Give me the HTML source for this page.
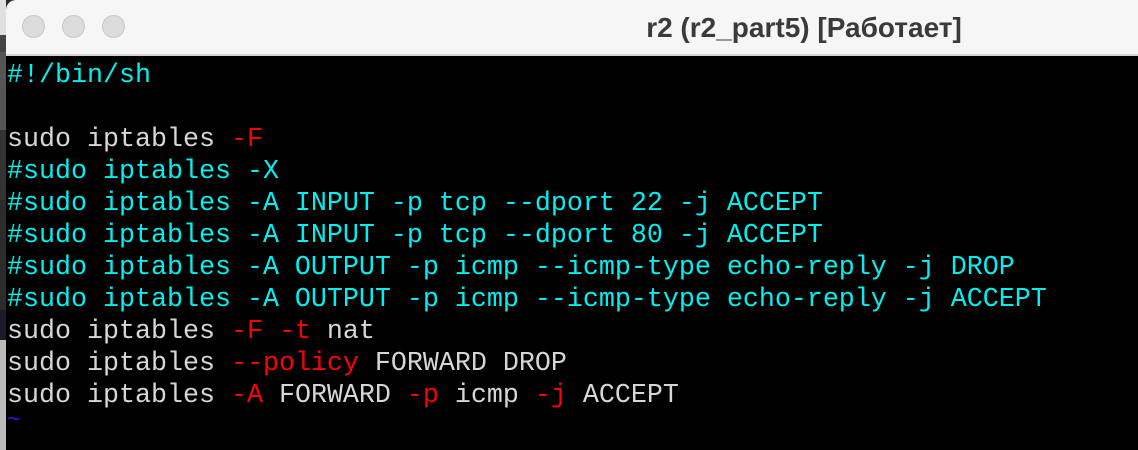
<!DOCTYPE html>
<html><head><meta charset="utf-8"><style>
html,body{margin:0;padding:0;width:1138px;height:450px;overflow:hidden;background:#2a2a2a;}
.strip{position:absolute;left:0;top:0;width:6px;height:450px;background:linear-gradient(#e0e0e0 0 35px,#444 35px 52px,#555 52px 130px,#333 130px 200px,#2c2c2c 200px 310px,#1a1a2a 310px 340px,#bbb 340px 450px);}
.win{position:absolute;left:6px;top:0;width:1132px;height:450px;background:#000;border-top-left-radius:10px;overflow:hidden;}
.bar{position:absolute;left:0;top:0;width:100%;height:54px;background:#f6f6f6;border-bottom:2px solid #d8d8d8;}
.dot{position:absolute;top:15px;width:23px;height:23px;border-radius:50%;background:#dcdcdc;border:1px solid #c8c8c8;box-sizing:border-box;}
.title{position:absolute;left:0;width:1596px;text-align:center;top:12px;font:bold 28px "Liberation Sans","Noto Sans CJK SC",sans-serif;color:#3a3a3a;white-space:nowrap;}
.term{position:absolute;left:1px;top:60px;height:390px;overflow:hidden;font-family:"Liberation Mono",monospace;font-size:26.67px;line-height:32px;white-space:pre;color:#d6d6d6;}
.c{color:#00f0f0}.r{color:#f00}.b{color:#2020ff;font-size:22px;position:relative;top:-8px}
</style></head><body>
<div class="strip"></div>
<div class="win">
<div class="bar">
<div class="dot" style="left:16px"></div><div class="dot" style="left:56px"></div><div class="dot" style="left:96px"></div>
<div class="title">r2 (r2_part5) [Работает]</div>
</div>
<div class="term"><span class="c">#!/bin/sh</span>

sudo iptables <span class="r">-F</span>
<span class="c">#sudo iptables -X</span>
<span class="c">#sudo iptables -A INPUT -p tcp --dport 22 -j ACCEPT</span>
<span class="c">#sudo iptables -A INPUT -p tcp --dport 80 -j ACCEPT</span>
<span class="c">#sudo iptables -A OUTPUT -p icmp --icmp-type echo-reply -j DROP</span>
<span class="c">#sudo iptables -A OUTPUT -p icmp --icmp-type echo-reply -j ACCEPT</span>
sudo iptables <span class="r">-F -t</span> nat
sudo iptables <span class="r">--policy</span> FORWARD DROP
sudo iptables <span class="r">-A</span> FORWARD <span class="r">-p</span> icmp <span class="r">-j</span> ACCEPT
<span class="b">~</span>
<span class="b">~</span></div>
</div>
</body></html>
